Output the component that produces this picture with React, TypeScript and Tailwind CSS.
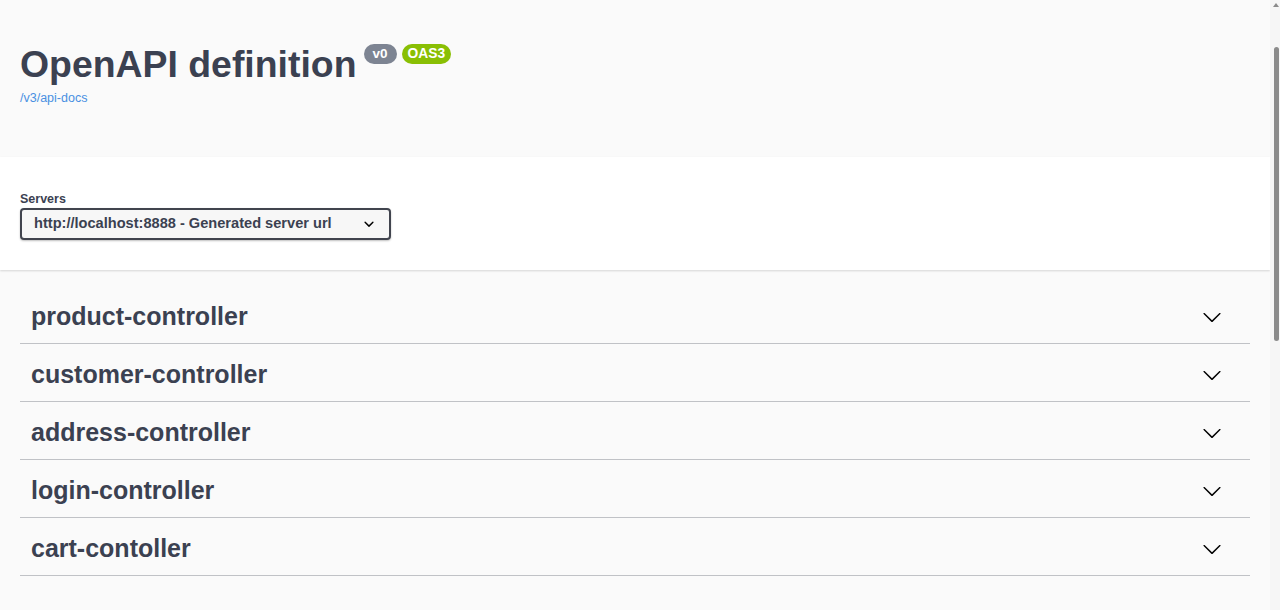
import React from "react";

const tags = [
  "product-controller",
  "customer-controller",
  "address-controller",
  "login-controller",
  "cart-contoller",
];

function Arrow() {
  return (
    <svg width="20" height="20" viewBox="0 0 20 20" className="shrink-0">
      <path
        fill="#000"
        d="M17.418 6.109c.272-.268.709-.268.979 0s.271.701 0 .969l-7.908 7.83c-.27.268-.707.268-.979 0l-7.908-7.83c-.27-.268-.27-.701 0-.969.271-.268.709-.268.979 0L10 13.25l7.418-7.141z"
      />
    </svg>
  );
}

function SelectArrow() {
  return (
    <svg width="20" height="20" viewBox="0 0 20 20">
      <path
        fill="#000"
        d="M13.418 7.859a.695.695 0 01.978 0 .68.68 0 010 .969l-3.908 3.83a.697.697 0 01-.979 0l-3.908-3.83a.68.68 0 010-.969.695.695 0 01.978 0L10 11l3.418-3.141z"
      />
    </svg>
  );
}

export default function App() {
  return (
    <div
      className="flex h-[610px] w-[1280px] overflow-hidden bg-[#fafafa] text-[#3b4151]"
      style={{ fontFamily: '"Liberation Sans", Arial, sans-serif' }}
    >
      <div className="flex-1 min-w-0">
        {/* info */}
        <div className="h-[157px] px-5 pt-[43px]">
          <div className="flex items-start">
            <h2 className="text-[37.4px] font-bold leading-[43px] text-[#3b4151]">
              OpenAPI definition
            </h2>
            <div className="ml-[7px] mt-[1px] flex gap-[5px]">
              <span className="rounded-full bg-[#7d8492] px-[9px] py-[2px] text-[13.5px] font-bold leading-[16px] text-white">
                v0
              </span>
              <span className="rounded-full bg-[#89bf04] px-[6px] py-[2px] text-[13.8px] font-bold leading-[16px] text-white">
                OAS3
              </span>
            </div>
          </div>
          <a className="mt-[5px] block text-[12.5px] leading-[14px] text-[#4990e2]">/v3/api-docs</a>
        </div>

        {/* servers */}
        <div className="bg-white px-5 pt-[35px] pb-[30px] shadow-[0_1px_2px_0_rgba(0,0,0,0.15)]">
          <div className="text-[12.5px] font-bold leading-[14px] text-[#3b4151]">Servers</div>
          <div className="mt-[2px] flex h-[32px] w-[371px] items-center justify-between rounded-[4px] border-2 border-[#41444e] bg-[#f7f7f7] pl-[12px] pr-[10px] shadow-[0_1px_2px_0_rgba(0,0,0,0.25)]">
            <span className="text-[14.6px] font-bold text-[#3b4151]">
              http://localhost:8888 - Generated server url
            </span>
            <SelectArrow />
          </div>
        </div>

        {/* tags */}
        <div className="px-5 pt-[21px]">
          {tags.map((t) => (
            <div
              key={t}
              className="mb-[5px] flex h-[53px] items-center justify-between border-b border-[#3b4151]/30 pl-[11px] pr-[28px]"
            >
              <span className="text-[25px] font-bold text-[#3b4151]">{t}</span>
              <Arrow />
            </div>
          ))}
        </div>
      </div>

      {/* scrollbar */}
      <div className="flex w-[10px] flex-col items-end bg-[#f6f6f6] pr-[1px]">
        <div className="mt-[3px] h-0 w-0 border-x-[3px] border-b-[4px] border-x-transparent border-b-[#8b8b8b]" />
        <div className="mt-[40px] h-[294px] w-[5px] rounded-full bg-[#8b8b8b]" />
      </div>
    </div>
  );
}
